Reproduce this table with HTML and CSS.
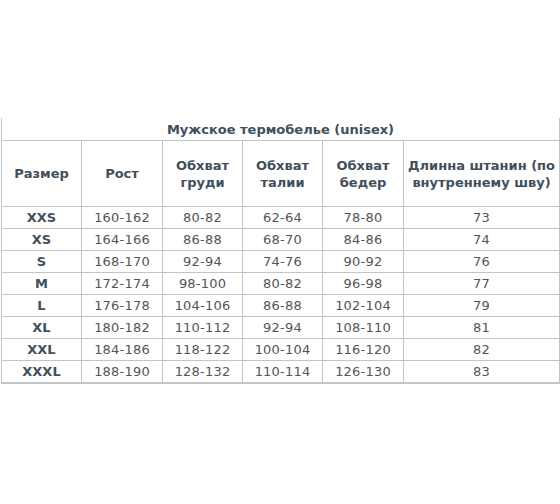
FILE: index.html
```html
<!DOCTYPE html>
<html lang="ru">
<head>
<meta charset="utf-8">
<link rel="stylesheet" href="styles.css">
</head>
<body>
<div class="wrap">
<table class="sizes">
<colgroup>
<col class="c1"><col class="c2"><col class="c3"><col class="c4"><col class="c5"><col class="c6">
</colgroup>
<thead>
<tr class="title-row"><th colspan="6">Мужское термобелье (unisex)</th></tr>
<tr class="head-row">
<th>Размер</th><th>Рост</th><th>Обхват<br>груди</th><th>Обхват<br>талии</th><th>Обхват<br>бедер</th><th>Длинна штанин (по<br>внутреннему шву)</th>
</tr>
</thead>
<tbody>
<tr><td class="sz">XXS</td><td>160-162</td><td>80-82</td><td>62-64</td><td>78-80</td><td>73</td></tr>
<tr><td class="sz">XS</td><td>164-166</td><td>86-88</td><td>68-70</td><td>84-86</td><td>74</td></tr>
<tr><td class="sz">S</td><td>168-170</td><td>92-94</td><td>74-76</td><td>90-92</td><td>76</td></tr>
<tr><td class="sz">M</td><td>172-174</td><td>98-100</td><td>80-82</td><td>96-98</td><td>77</td></tr>
<tr><td class="sz">L</td><td>176-178</td><td>104-106</td><td>86-88</td><td>102-104</td><td>79</td></tr>
<tr><td class="sz">XL</td><td>180-182</td><td>110-112</td><td>92-94</td><td>108-110</td><td>81</td></tr>
<tr><td class="sz">XXL</td><td>184-186</td><td>118-122</td><td>100-104</td><td>116-120</td><td>82</td></tr>
<tr><td class="sz">XXXL</td><td>188-190</td><td>128-132</td><td>110-114</td><td>126-130</td><td>83</td></tr>
</tbody>
</table>
</div>
</body>
</html>
```
FILE: styles.css
```css
html, body {
  margin: 0;
  padding: 0;
  background: #ffffff;
}
.wrap {
  padding: 118px 0 0 1px;
}
.sizes {
  border-collapse: collapse;
  table-layout: fixed;
  width: 559px;
  font-family: "DejaVu Sans", Verdana, sans-serif;
  font-size: 13px;
  color: #555555;
  border-left: 1px solid #c4c4c4;
  border-right: 1px solid #c4c4c4;
  border-bottom: 2px solid #c4c4c4;
}
.c1 { width: 80px; }
.c2 { width: 81px; }
.c3 { width: 80px; }
.c4 { width: 80px; }
.c5 { width: 81px; }
.c6 { width: auto; }
.sizes th, .sizes td {
  padding: 0;
  text-align: center;
  vertical-align: middle;
}
.sizes th {
  color: #3f4f5c;
  font-weight: bold;
}
.title-row th {
  height: 22px;
  font-size: 13px;
  border-bottom: 1px solid #c4c4c4;
}
.head-row th {
  height: 65px;
  line-height: 17px;
  border-right: 1px solid #c4c4c4;
  border-bottom: 1px solid #c4c4c4;
}
.sizes td {
  height: 21px;
  line-height: 21px;
  letter-spacing: 0.2px;
  border-right: 1px solid #c4c4c4;
  border-bottom: 1px solid #c4c4c4;
}
.sizes td.sz {
  color: #3f4f5c;
  font-weight: bold;
  letter-spacing: 0;
}
```
